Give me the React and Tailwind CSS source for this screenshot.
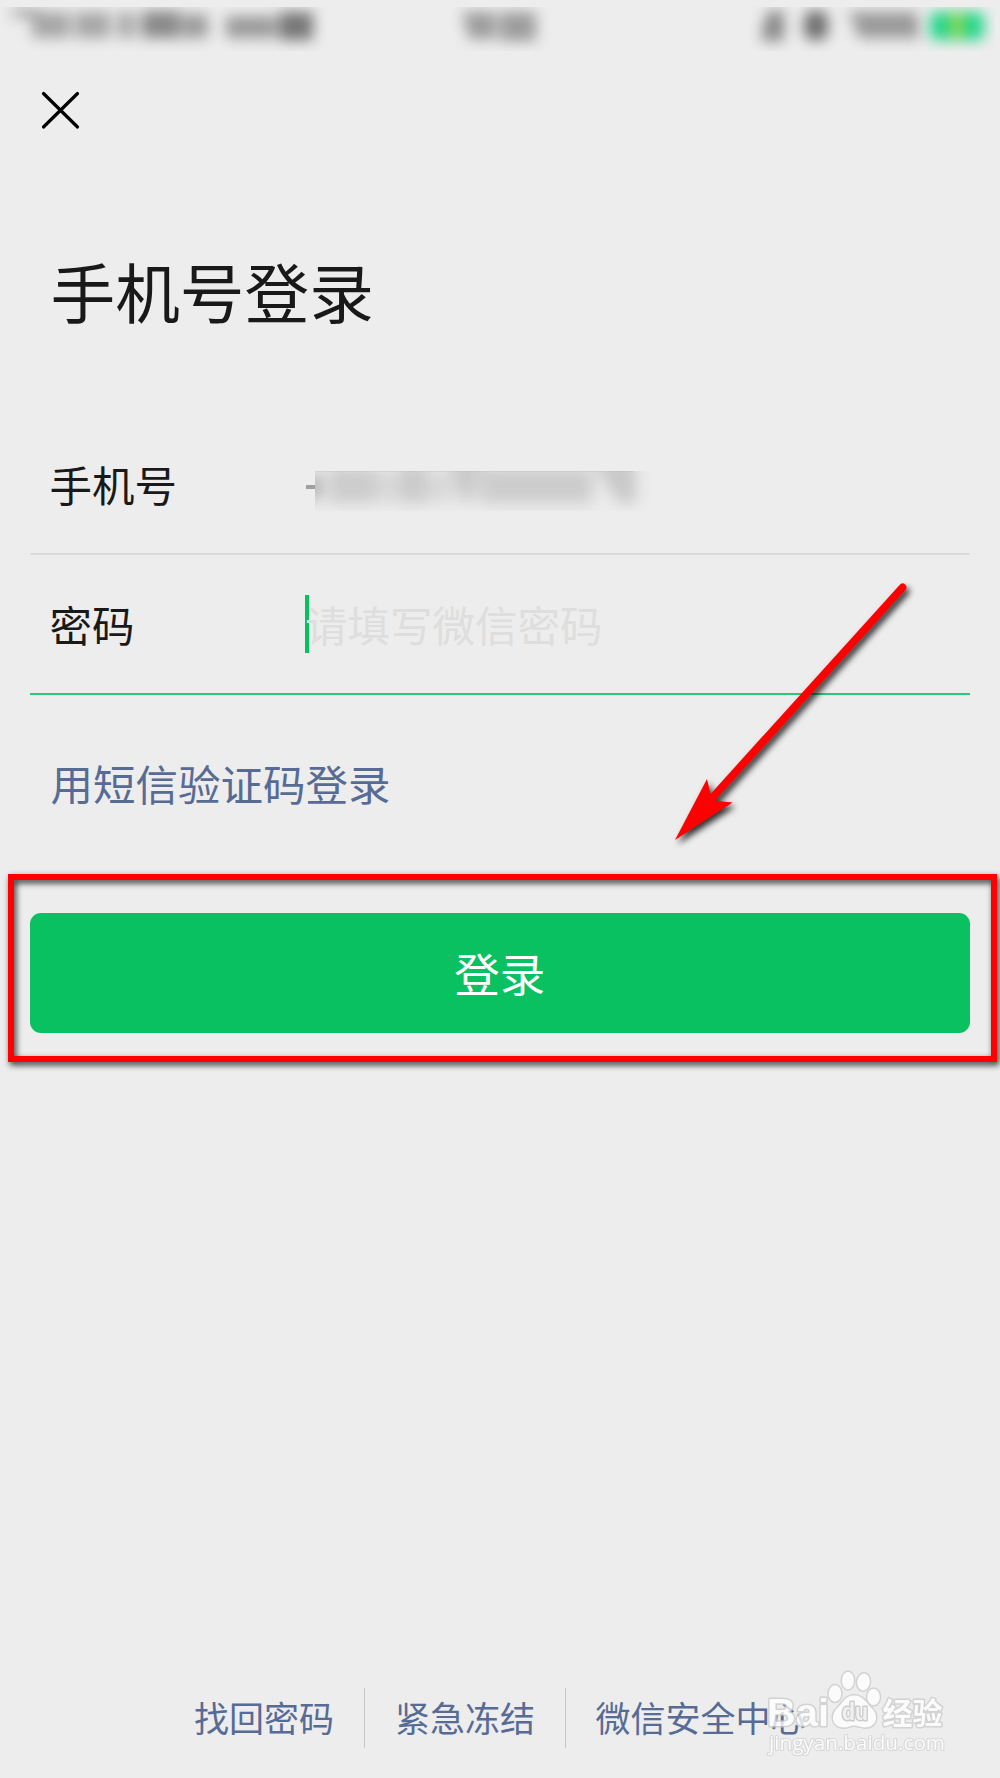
import React from "react";

const CJK = "font-['Noto_Sans_CJK_SC',sans-serif]";

function StatusBar() {
  return (
    <header className="mt-[7px] h-[44px] overflow-hidden">
      <svg viewBox="0 0 1000 44" className="block h-[44px] w-[1000px]" aria-hidden="true">
        <defs>
          <filter id="soft" x="-20%" y="-100%" width="140%" height="300%" colorInterpolationFilters="sRGB">
            <feGaussianBlur stdDeviation="7" />
          </filter>
        </defs>
        <g filter="url(#soft)" fill="#626262">
          <rect x="12" y="1" width="26" height="10" opacity=".45" />
          <rect x="32" y="5" width="38" height="26" opacity=".5" />
          <rect x="75" y="5" width="35" height="26" opacity=".5" />
          <rect x="117" y="5" width="19" height="26" opacity=".46" />
          <rect x="142" y="4" width="38" height="27" opacity=".72" />
          <rect x="182" y="7" width="26" height="24" opacity=".58" />
          <rect x="226" y="9" width="50" height="22" opacity=".6" />
          <rect x="279" y="5" width="34" height="28" opacity=".85" />
          <path d="M462 5h34v27h-27z" opacity=".58" />
          <rect x="500" y="5" width="36" height="29" opacity=".58" />
          <path d="M768 4h16v30h-22V23z" opacity=".72" />
          <rect x="804" y="4" width="24" height="29" rx="8" opacity=".9" />
          <path d="M847 5h70l3 26h-62l-4-15z" opacity=".6" />
        </g>
        <g filter="url(#soft)">
          <rect x="930" y="5" width="54" height="28" rx="6" fill="#23d58b" />
          <rect x="950" y="7" width="14" height="23" fill="#8fd64f" />
        </g>
      </svg>
    </header>
  );
}

function MaskedNumber() {
  return (
    <svg viewBox="0 0 350 50" className="h-[50px] w-[350px]" role="img" aria-label="已隐藏的手机号">
      <defs>
        <filter id="mask-soft" x="-10%" y="-60%" width="120%" height="220%" colorInterpolationFilters="sRGB">
          <feGaussianBlur stdDeviation="7.500" />
        </filter>
        <clipPath id="mask-clip">
          <rect x="9" y="10" width="341" height="40" />
        </clipPath>
      </defs>
      <rect x="0" y="24" width="9" height="4" fill="#a0a0a0" />
      <g clipPath="url(#mask-clip)">
        <g filter="url(#mask-soft)" fill="#a0a0a0">
          <rect x="0" y="14" width="14" height="24" opacity=".95" />
          <rect x="22" y="6" width="45" height="36" opacity=".42" />
          <rect x="65" y="8" width="32" height="33" opacity=".28" />
          <rect x="96" y="2" width="24" height="40" opacity=".44" />
          <rect x="120" y="10" width="26" height="31" opacity=".26" />
          <path d="M143 0h32l-8 40h-13z" opacity=".46" />
          <rect x="174" y="7" width="113" height="35" opacity=".42" />
          <path d="M286 0h44v42h-18z" opacity=".48" />
        </g>
        <path d="M10 10.500h318" stroke="#aaa" strokeOpacity=".2" />
      </g>
    </svg>
  );
}

function Arrow() {
  return (
    <svg viewBox="0 0 260 280" className="pointer-events-none absolute left-[665px] top-[575px] h-[280px] w-[260px] overflow-visible" aria-hidden="true">
      <g className="drop-shadow-[3px_4px_3px_rgba(0,0,0,0.8)]">
        <path d="M237.5 12.5 L48 222" stroke="#f00" strokeWidth="7.8" strokeLinecap="round" />
        <path d="M10 265 L42 204 L46 221 L52 226 L67.5 227.5 Z" fill="#f00" />
      </g>
    </svg>
  );
}

function Watermark() {
  return (
    <svg viewBox="0 0 200 100" className="pointer-events-none absolute left-[760px] top-[1662px] h-[100px] w-[200px] overflow-visible" aria-hidden="true">
      <g fill="#fff" stroke="#cbcbcb" strokeWidth="3" paintOrder="stroke" opacity=".78" strokeLinejoin="round">
        <text x="7" y="63.500" textLength="62" lengthAdjust="spacingAndGlyphs" fontSize="38" fontWeight="700" fontFamily="Liberation Sans, sans-serif">Bai</text>
        <ellipse cx="75" cy="31.5" rx="6.3" ry="8.3" />
        <ellipse cx="88" cy="18.5" rx="6" ry="8.7" />
        <ellipse cx="103.500" cy="20" rx="6.3" ry="8.5" transform="rotate(8 103.5 20)" />
        <ellipse cx="113.500" cy="35" rx="6.3" ry="8.3" />
        <path d="M94 33.500c-9 0-11 7-17 13-7 7-5 19 7 19 4 0 7-2 10-2s7 2 11 2c12 0 14-12 7-19-7-7-9-13-18-13z" />
        <text x="82" y="57.500" textLength="26" lengthAdjust="spacingAndGlyphs" fontSize="23" fontWeight="700" fontFamily="Liberation Sans, sans-serif" fill="#f2f2f2" stroke="#c4c4c4">du</text>
        <text x="122.500" y="61.500" textLength="60" lengthAdjust="spacingAndGlyphs" fontSize="30" fontWeight="700" fontFamily="Noto Sans CJK SC, sans-serif">经验</text>
        <text x="9" y="88" textLength="176" lengthAdjust="spacingAndGlyphs" fontSize="20.5" fontFamily="Open Sans, sans-serif" stroke="#d2d2d2" strokeWidth="2.200">jingyan.baidu.com</text>
      </g>
    </svg>
  );
}

export default function App() {
  return (
    <main className={`${CJK} relative flex h-[1778px] w-[1000px] flex-col overflow-hidden bg-[#ededed] text-[#191919]`}>
      <StatusBar />
      <button className="ml-[40px] mt-[38px] h-[42px] w-[42px]" aria-label="关闭">
        <svg viewBox="0 0 42 42" className="h-[42px] w-[42px]" fill="none" stroke="#000" strokeWidth="3.2" strokeLinecap="round">
          <path d="M3.500 4.500 37.500 38M37.500 4.500 3.500 38" />
        </svg>
      </button>
      <h1 className="ml-[50.5px] mt-[109px] h-[100px] text-[64.7px] leading-[100px]">手机号登录</h1>

      <section className="ml-[29.5px] mt-[78px] w-[940.5px]">
        <div className="flex h-[137px] items-center border-b-2 border-[#dadada]">
          <label className="w-[276px] pb-[3px] pl-[20px] text-[42.5px] leading-[60px]">手机号</label>
          <MaskedNumber />
        </div>
        <div className="flex h-[140px] items-center border-b-2 border-[#26ca7a]">
          <label className="w-[275px] pb-[1px] pl-[20px] text-[42.5px] leading-[60px]">密码</label>
          <span className="h-[58px] w-[4px] bg-[#07c160]" />
          <span className="-ml-[3.5px] pb-[1px] text-[42.5px] leading-[60px] text-[#dedede]">请填写微信密码</span>
        </div>
      </section>

      <a className="ml-[50.5px] mt-[58px] h-[60px] text-[42.5px] leading-[60px] text-[#576b95]">用短信验证码登录</a>

      <button className="ml-[29.5px] mt-[100px] h-[120px] w-[940.5px] rounded-[11px] bg-[#09c160] pb-[2px] text-[45.5px] leading-[118px] text-white">登录</button>

      <footer className="mt-[655px] flex h-[60px] items-center pl-[194px] text-[35px] leading-[58px] text-[#576b95]">
        <a className="w-[170px] pb-[2px]">找回密码</a>
        <span className="h-[60px] w-px bg-[#c6c6c6]" />
        <a className="w-[200px] pb-[2px] pl-[30px]">紧急冻结</a>
        <span className="h-[60px] w-px bg-[#c6c6c6]" />
        <a className="pb-[2px] pl-[29.5px]">微信安全中心</a>
      </footer>

      <div className="pointer-events-none absolute left-[8px] top-[874px] h-[188px] w-[989px] border-[6px] border-[#f00] drop-shadow-[2px_3px_3px_rgba(0,0,0,0.8)]" />
      <Arrow />
      <Watermark />
    </main>
  );
}
